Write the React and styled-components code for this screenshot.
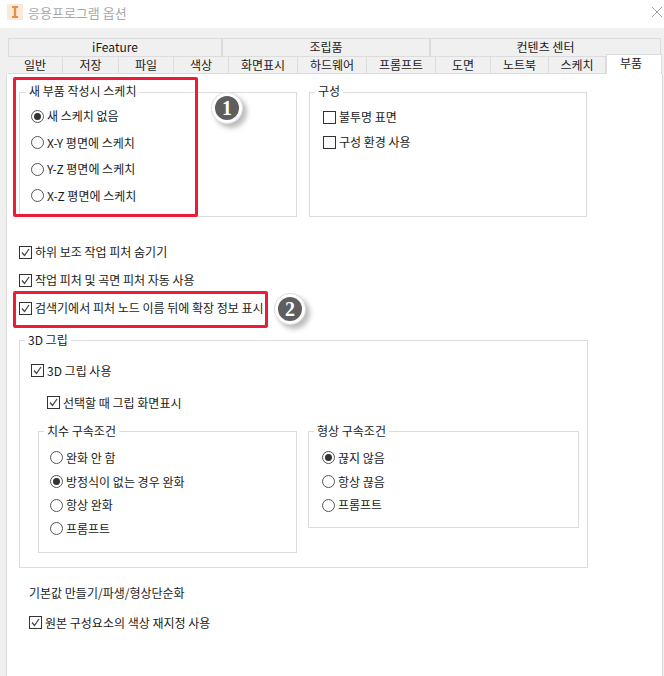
import React from 'react';
import styled, { createGlobalStyle } from 'styled-components';

const GlobalStyle = createGlobalStyle`
  html, body {
    margin: 0;
    padding: 0;
    background: #fefffe;
  }
  * {
    box-sizing: border-box;
  }
`;

const Window = styled.div`
  display: flex;
  flex-direction: column;
  width: 664px;
  height: 676px;
  overflow: hidden;
  font-family: "Noto Sans CJK KR", "Liberation Sans", sans-serif;
  font-size: 12px;
  line-height: 16px;
  color: #1a1a1a;
  background: #f0f0f0;
`;

const TitleBar = styled.div`
  display: flex;
  flex: 0 0 28px;
  align-items: flex-start;
  padding: 4px 2px 0 7px;
  background: #fefffe;
`;

const TitleText = styled.span`
  flex: 1;
  margin-left: 5px;
  font-size: 13px;
  line-height: 17px;
  color: #a8a8a8;
`;

const CloseIcon = styled.svg`
  width: 10px;
  height: 10px;
  margin-top: 3px;
`;

const TabArea = styled.div`
  display: flex;
  flex-direction: column;
  padding: 10px 2px 0 8px;
`;

const TabRow = styled.div`
  display: flex;
  height: 18px;
`;

const Tab = styled.div`
  width: ${(props) => props.width}px;
  height: ${(props) => (props.active ? 20 : 18)}px;
  margin-top: ${(props) => (props.active ? -2 : 0)}px;
  padding-right: ${(props) => (props.active ? 6 : 0)}px;
  border: 1px solid #dcdcdc;
  border-width: ${(props) => (props.active ? '1px 1px 0 1px' : props.top ? '1px 1px 0 1px' : '1px 1px 1px 0')};
  background: ${(props) => (props.active ? '#fefffe' : '#f0f0f0')};
  text-align: center;
  line-height: 15px;
  position: ${(props) => (props.active ? 'relative' : 'static')};
  z-index: 1;
`;

const Panel = styled.div`
  position: relative;
  flex: 1;
  margin: 0 1px 0 6px;
  padding: 10px 0 0 12px;
  border-left: 1px solid #dcdcdc;
  border-right: 1px solid #dcdcdc;
  background: #fefffe;
`;

const Columns = styled.div`
  display: grid;
  grid-template-columns: ${(props) => props.columns};
  column-gap: ${(props) => props.gap}px;
  align-items: start;
  margin: ${(props) => props.margin || 0};
`;

const Group = styled.fieldset`
  min-width: 0;
  width: ${(props) => (props.width ? `${props.width}px` : 'auto')};
  height: ${(props) => (props.height ? `${props.height}px` : 'auto')};
  margin: 0;
  padding: 0;
  border: 1px solid #dcdcdc;
`;

const GroupTitle = styled.legend`
  margin-left: ${(props) => props.indent || 6}px;
  padding: 0 3px 2px;
  line-height: 14px;
`;

const GroupBody = styled.div`
  padding: ${(props) => props.pad};
`;

const Stack = styled.div`
  display: flex;
  flex-direction: column;
  gap: ${(props) => props.gap}px;
`;

const Row = styled.label`
  display: flex;
  align-items: center;
  height: 16px;
  white-space: nowrap;
  margin-left: ${(props) => props.indent || 0}px;
  margin-top: ${(props) => props.top || 0}px;
`;

const RadioMark = styled.span`
  display: flex;
  flex: 0 0 13px;
  align-items: center;
  justify-content: center;
  height: 13px;
  margin-right: 3px;
  border: 1px solid #555;
  border-radius: 50%;
  background: #fff;
  &::after {
    content: '';
    display: ${(props) => (props.on ? 'block' : 'none')};
    width: 7px;
    height: 7px;
    border-radius: 50%;
    background: #333;
  }
`;

const BoxMark = styled.span`
  display: flex;
  flex: 0 0 13px;
  height: 13px;
  margin-right: 3px;
  border: 1px solid #333;
  background: #fff;
`;

const ChecksBlock = styled.div`
  display: flex;
  flex-direction: column;
  gap: 12.2px;
  margin: 27px 0 16.6px;
`;

const Plain = styled.div`
  margin: 17px 0 14px 10px;
`;

const Highlight = styled.div`
  position: absolute;
  left: ${(props) => props.x}px;
  top: ${(props) => props.y}px;
  width: ${(props) => props.w}px;
  height: ${(props) => props.h}px;
  border: 3px solid #ec1c38;
  border-radius: 2px;
  pointer-events: none;
`;

const Badge = styled.div`
  position: absolute;
  left: ${(props) => props.x}px;
  top: ${(props) => props.y}px;
  display: flex;
  align-items: center;
  justify-content: center;
  width: 30px;
  height: 30px;
  border: 3px solid #fff;
  border-radius: 50%;
  background: #5e5e5e;
  box-shadow: 0 0 0 1px #dedede, 4px 4px 5px 1px #bdbdbd;
  font-family: "Liberation Serif", serif;
  font-size: 20px;
  font-weight: 700;
  color: #fff;
`;

const Radio = ({ on, children }) => (
  <Row>
    <RadioMark on={on ? 1 : 0} />
    {children}
  </Row>
);

const Check = ({ on, indent, top, children }) => (
  <Row indent={indent} top={top}>
    <BoxMark>
      {on && (
        <svg width="11" height="11" viewBox="0 0 11 11">
          <path d="M2 5.5 L4.5 8.5 L9 2" fill="none" stroke="#444" strokeWidth="1.3" />
        </svg>
      )}
    </BoxMark>
    {children}
  </Row>
);

const topTabs = [
  ['iFeature', 214],
  ['조립품', 208],
  ['컨텐츠 센터', 231],
];

const bottomTabs = [
  ['일반', 55],
  ['저장', 56],
  ['파일', 55],
  ['색상', 55],
  ['화면표시', 69],
  ['하드웨어', 69],
  ['프롬프트', 69],
  ['도면', 55],
  ['노트북', 58],
  ['스케치', 57],
];

export default function App() {
  return (
    <Window>
      <GlobalStyle />
      <TitleBar>
        <svg width="16" height="16" viewBox="0 0 16 16">
          <rect width="16" height="16" fill="#fbe8d8" />
          <path d="M5 2 H11 V4 H9.2 V12 H11 V14 H5 V12 H6.8 V4 H5 Z" fill="#df9248" />
        </svg>
        <TitleText>응용프로그램 옵션</TitleText>
        <CloseIcon viewBox="0 0 10 10">
          <path d="M0 0 L10 10 M10 0 L0 10" stroke="#a0a0a0" strokeWidth="1" />
        </CloseIcon>
      </TitleBar>
      <TabArea>
        <TabRow>
          {topTabs.map(([name, width]) => (
            <Tab key={name} width={width} top={1}>{name}</Tab>
          ))}
        </TabRow>
        <TabRow>
          {bottomTabs.map(([name, width]) => (
            <Tab key={name} width={width}>{name}</Tab>
          ))}
          <Tab width={56} active={1}>부품</Tab>
        </TabRow>
      </TabArea>
      <Panel>
        <Columns columns="278px 278px" gap={12}>
          <Group height={133}>
            <GroupTitle>새 부품 작성시 스케치</GroupTitle>
            <GroupBody pad="8px 0 0 11px">
              <Stack gap={10.67}>
                <Radio on>새 스케치 없음</Radio>
                <Radio>X-Y 평면에 스케치</Radio>
                <Radio>Y-Z 평면에 스케치</Radio>
                <Radio>X-Z 평면에 스케치</Radio>
              </Stack>
            </GroupBody>
          </Group>
          <Group height={133}>
            <GroupTitle indent={5}>구성</GroupTitle>
            <GroupBody pad="9px 0 0 13px">
              <Stack gap={9}>
                <Check>불투명 표면</Check>
                <Check>구성 환경 사용</Check>
              </Stack>
            </GroupBody>
          </Group>
        </Columns>
        <ChecksBlock>
          <Check on>하위 보조 작업 피처 숨기기</Check>
          <Check on>작업 피처 및 곡면 피처 자동 사용</Check>
          <Check on>검색기에서 피처 노드 이름 뒤에 확장 정보 표시</Check>
        </ChecksBlock>
        <Group width={569}>
          <GroupTitle indent={5}>3D 그립</GroupTitle>
          <GroupBody pad="14px 0 14px 11px">
            <Check on>3D 그립 사용</Check>
            <Check on indent={16} top={16}>선택할 때 그립 화면표시</Check>
            <Columns columns="259px 271px" gap={11} margin="13px 0 0 7px">
              <Group height={129}>
                <GroupTitle indent={5}>치수 구속조건</GroupTitle>
                <GroupBody pad="10px 0 0 11px">
                  <Stack gap={7.67}>
                    <Radio>완화 안 함</Radio>
                    <Radio on>방정식이 없는 경우 완화</Radio>
                    <Radio>항상 완화</Radio>
                    <Radio>프롬프트</Radio>
                  </Stack>
                </GroupBody>
              </Group>
              <Group height={104}>
                <GroupTitle indent={5}>형상 구속조건</GroupTitle>
                <GroupBody pad="10px 0 0 13px">
                  <Stack gap={7.67}>
                    <Radio on>끊지 않음</Radio>
                    <Radio>항상 끊음</Radio>
                    <Radio>프롬프트</Radio>
                  </Stack>
                </GroupBody>
              </Group>
            </Columns>
          </GroupBody>
        </Group>
        <Plain>기본값 만들기/파생/형상단순화</Plain>
        <Check on indent={10}>원본 구성요소의 색상 재지정 사용</Check>
        <Highlight x={6} y={3} w={185} h={140} />
        <Highlight x={6} y={217} w={255} h={37} />
        <Badge x={205} y={19}>1</Badge>
        <Badge x={268} y={220}>2</Badge>
      </Panel>
    </Window>
  );
}
